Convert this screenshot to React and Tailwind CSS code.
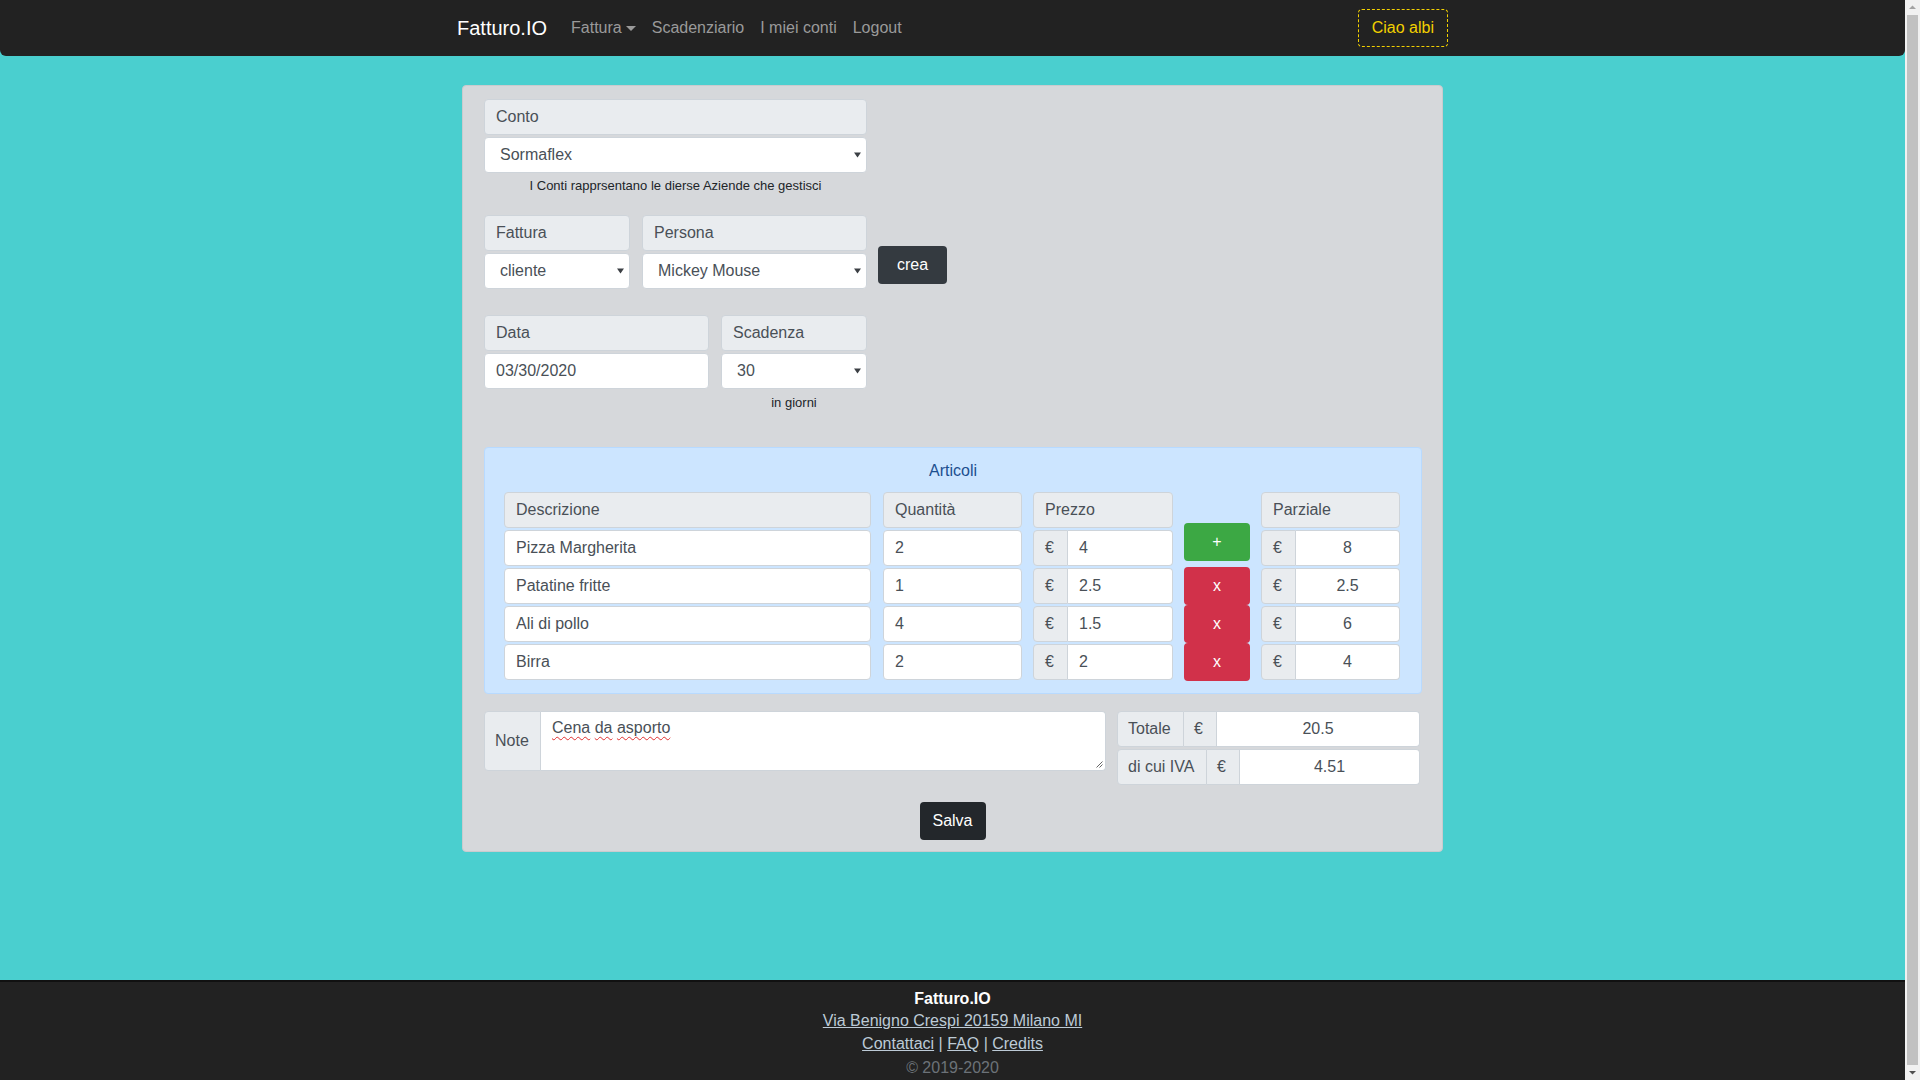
import React from "react";

function Caret() {
  return (
    <svg width="7" height="6" viewBox="0 0 7 6" className="shrink-0">
      <path d="M0 0.5h7L3.5 5.5z" fill="#3b3f44" />
    </svg>
  );
}

function Label({ children }) {
  return (
    <div className="h-[36px] bg-[#e9ecef] border border-[#ced4da] rounded-[4px] flex items-center px-[11px] text-[#495057] text-[16px]">
      {children}
    </div>
  );
}

function Select({ value }) {
  return (
    <div className="h-[36px] bg-white border border-[#ced4da] rounded-[4px] flex items-center justify-between pl-[15px] pr-[5px] text-[#495057] text-[16px]">
      <span>{value}</span>
      <Caret />
    </div>
  );
}

function Input({ value }) {
  return (
    <div className="h-[36px] bg-white border border-[#ced4da] rounded-[4px] flex items-center px-[11px] text-[#495057] text-[16px]">
      {value}
    </div>
  );
}

function EuroInput({ value, center }) {
  return (
    <div className="h-[36px] flex text-[#495057] text-[16px]">
      <div className="w-[35px] shrink-0 bg-[#e9ecef] border border-[#ced4da] rounded-l-[4px] flex items-center pl-[11px]">€</div>
      <div
        className={
          center
            ? "flex-1 bg-white border border-l-0 border-[#ced4da] rounded-r-[4px] flex items-center justify-center"
            : "flex-1 bg-white border border-l-0 border-[#ced4da] rounded-r-[4px] flex items-center pl-[11px]"
        }
      >
        {value}
      </div>
    </div>
  );
}

const rows = [
  { d: "Pizza Margherita", q: "2", p: "4", t: "8" },
  { d: "Patatine fritte", q: "1", p: "2.5", t: "2.5" },
  { d: "Ali di pollo", q: "4", p: "1.5", t: "6" },
  { d: "Birra", q: "2", p: "2", t: "4" },
];

function Scrollbar() {
  return (
    <div className="w-[15px] shrink-0 h-[1080px] bg-[#f1f1f1] flex flex-col items-center">
      <svg width="15" height="15" viewBox="0 0 15 15" className="shrink-0">
        <path d="M4 9h7L7.5 5.5z" fill="#a3a3a3" />
      </svg>
      <div className="flex-1 w-[11px] bg-[#c1c1c1]" />
      <svg width="15" height="15" viewBox="0 0 15 15" className="shrink-0">
        <path d="M4 6h7L7.5 9.5z" fill="#505050" />
      </svg>
    </div>
  );
}

export default function App() {
  return (
    <div className="flex items-start bg-[#4acfcf]">
      <div className="w-[1905px] shrink-0 bg-[#4acfcf] font-['Liberation_Sans',Arial,sans-serif] text-[16px]">
        {/* Navbar */}
        <nav className="h-[56px] bg-[#222222] rounded-b-[6px] flex items-center">
          <div className="w-[991px] mx-auto flex items-center">
            <span className="text-white text-[20px] mr-[16px] leading-[30px]">Fatturo.IO</span>
            <span className="px-[8px] text-[#9a9a9a] flex items-center gap-[4px]">
              Fattura
              <svg width="10" height="5" viewBox="0 0 10 5">
                <path d="M0 0h10L5 5z" fill="#9a9a9a" />
              </svg>
            </span>
            <span className="px-[8px] text-[#9a9a9a]">Scadenziario</span>
            <span className="px-[8px] text-[#9a9a9a]">I miei conti</span>
            <span className="px-[8px] text-[#9a9a9a]">Logout</span>
            <div className="ml-auto h-[38px] px-[13px] border border-dashed border-[#f2d000] rounded-[4px] flex items-center text-[#f2d000]">
              Ciao albi
            </div>
          </div>
        </nav>

        {/* Main */}
        <main className="h-[924px] pt-[29px]">
          <div className="w-[981px] mx-auto bg-[#d6d8db] border border-[#c9cbce] rounded-[4px] pt-[13px] pl-[21px] pr-[20px] pb-[11px]">
            {/* Conto */}
            <div className="w-[383px]">
              <div className="flex flex-col gap-[2px]">
                <Label>Conto</Label>
                <Select value="Sormaflex" />
              </div>
              <div className="mt-[3px] text-center text-[13px] leading-[20px] text-[#212529]">
                I Conti rapprsentano le dierse Aziende che gestisci
              </div>
            </div>

            {/* Fattura / Persona */}
            <div className="mt-[19px] flex items-start">
              <div className="w-[146px] flex flex-col gap-[2px]">
                <Label>Fattura</Label>
                <Select value="cliente" />
              </div>
              <div className="w-[225px] ml-[12px] flex flex-col gap-[2px]">
                <Label>Persona</Label>
                <Select value="Mickey Mouse" />
              </div>
              <button className="ml-[11px] mt-[31px] w-[69px] h-[38px] bg-[#343a40] text-white rounded-[4px] text-[16px]">
                crea
              </button>
            </div>

            {/* Data / Scadenza */}
            <div className="mt-[26px] flex items-start">
              <div className="w-[225px] flex flex-col gap-[2px]">
                <Label>Data</Label>
                <Input value="03/30/2020" />
              </div>
              <div className="w-[146px] ml-[12px] flex flex-col">
                <div className="flex flex-col gap-[2px]">
                  <Label>Scadenza</Label>
                  <Select value="30" />
                </div>
                <div className="mt-[4px] text-center text-[13px] leading-[20px] text-[#212529]">in giorni</div>
              </div>
            </div>

            {/* Articoli */}
            <div className="mt-[34px] w-[938px] bg-[#cce5ff] border border-[#b8daff] rounded-[4px] pt-[11px] pl-[19px] pb-[12px]">
              <div className="text-center text-[#1c4f8f] leading-[24px] pr-[19px]">Articoli</div>
              <div className="mt-[9px] flex items-start">
                <div className="w-[367px] flex flex-col gap-[2px]">
                  <Label>Descrizione</Label>
                  {rows.map((r) => (
                    <Input key={r.d} value={r.d} />
                  ))}
                </div>
                <div className="w-[139px] ml-[12px] flex flex-col gap-[2px]">
                  <Label>Quantità</Label>
                  {rows.map((r, i) => (
                    <Input key={i} value={r.q} />
                  ))}
                </div>
                <div className="w-[140px] ml-[11px] flex flex-col gap-[2px]">
                  <Label>Prezzo</Label>
                  {rows.map((r, i) => (
                    <EuroInput key={i} value={r.p} />
                  ))}
                </div>
                <div className="w-[66px] ml-[11px] flex flex-col pt-[31px]">
                  <button className="h-[38px] bg-[#3ca844] text-white rounded-[4px] text-[16px]">+</button>
                  <div className="mt-[6px] flex flex-col">
                    <button className="h-[38px] bg-[#d1314a] text-white rounded-[4px] text-[16px]">x</button>
                    <button className="h-[38px] bg-[#d1314a] text-white rounded-[4px] text-[16px]">x</button>
                    <button className="h-[38px] bg-[#d1314a] text-white rounded-[4px] text-[16px]">x</button>
                  </div>
                </div>
                <div className="w-[139px] ml-[11px] flex flex-col gap-[2px]">
                  <Label>Parziale</Label>
                  {rows.map((r, i) => (
                    <EuroInput key={i} value={r.t} center />
                  ))}
                </div>
              </div>
            </div>

            {/* Note / Totale */}
            <div className="mt-[17px] flex items-start">
              <div className="w-[622px] h-[60px] flex text-[#495057]">
                <div className="w-[57px] shrink-0 bg-[#e9ecef] border border-[#ced4da] rounded-l-[4px] flex items-center pl-[10px]">
                  Note
                </div>
                <div className="relative flex-1 bg-white border border-l-0 border-[#ced4da] rounded-r-[4px] pl-[11px] pt-[4px] leading-[24px]">
                  <span className="underline decoration-wavy decoration-[#e0302f] decoration-1 underline-offset-[3px]">Cena</span>{" "}
                  <span className="underline decoration-wavy decoration-[#e0302f] decoration-1 underline-offset-[3px]">da</span>{" "}
                  <span className="underline decoration-wavy decoration-[#e0302f] decoration-1 underline-offset-[3px]">asporto</span>
                  <svg className="absolute right-[2px] bottom-[2px]" width="8" height="8" viewBox="0 0 8 8">
                    <path d="M7.5 1.5L1.5 7.5M7.5 4.5L4.5 7.5" stroke="#666" strokeWidth="1" />
                  </svg>
                </div>
              </div>
              <div className="w-[303px] ml-[11px] flex flex-col gap-[2px] text-[#495057]">
                <div className="h-[36px] flex">
                  <div className="w-[67px] shrink-0 bg-[#e9ecef] border border-[#ced4da] rounded-l-[4px] flex items-center pl-[10px]">Totale</div>
                  <div className="w-[33px] shrink-0 bg-[#e9ecef] border border-l-0 border-[#ced4da] flex items-center pl-[10px]">€</div>
                  <div className="flex-1 bg-white border border-l-0 border-[#ced4da] rounded-r-[4px] flex items-center justify-center">20.5</div>
                </div>
                <div className="h-[36px] flex">
                  <div className="w-[90px] shrink-0 bg-[#e9ecef] border border-[#ced4da] rounded-l-[4px] flex items-center pl-[10px]">di cui IVA</div>
                  <div className="w-[33px] shrink-0 bg-[#e9ecef] border border-l-0 border-[#ced4da] flex items-center pl-[10px]">€</div>
                  <div className="flex-1 bg-white border border-l-0 border-[#ced4da] rounded-r-[4px] flex items-center justify-center">4.51</div>
                </div>
              </div>
            </div>

            <div className="mt-[17px] flex justify-center pr-[1px]">
              <button className="w-[66px] h-[38px] bg-[#23272b] text-white rounded-[4px] text-[16px]">Salva</button>
            </div>
          </div>
        </main>

        {/* Footer */}
        <footer className="bg-[#222222] border-t-2 border-[#111111] pt-[6px] pb-[10px] text-center">
          <div className="text-white font-bold leading-[22px]">Fatturo.IO</div>
          <div className="leading-[22px]">
            <a className="text-[#bccad6] underline">Via Benigno Crespi 20159 Milano MI</a>
          </div>
          <div className="text-[#bccad6] leading-[24px]">
            <a className="underline">Contattaci</a> | <a className="underline">FAQ</a> | <a className="underline">Credits</a>
          </div>
          <div className="text-[#6c7278] leading-[24px]">© 2019-2020</div>
        </footer>
      </div>
      <Scrollbar />
    </div>
  );
}
